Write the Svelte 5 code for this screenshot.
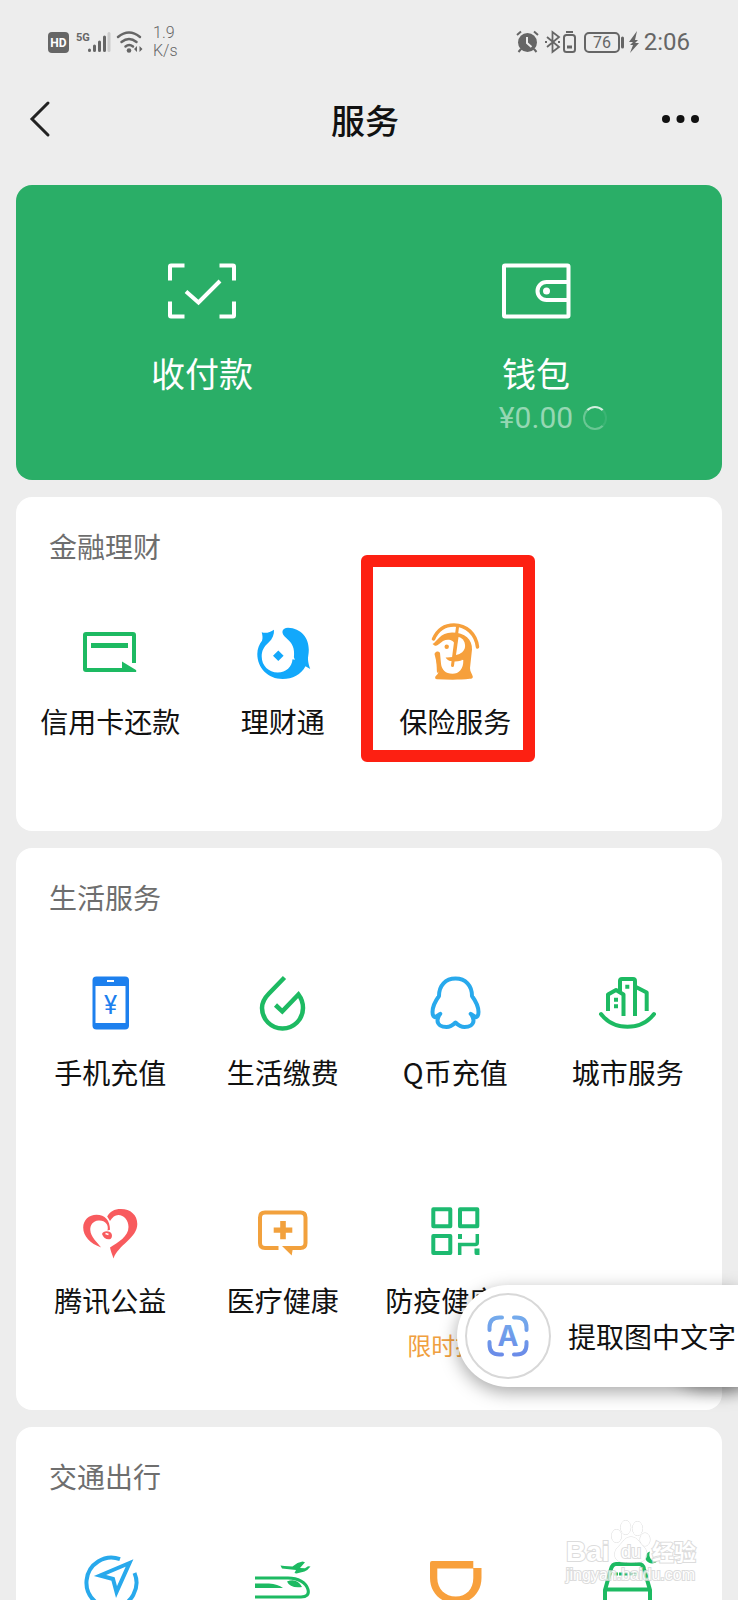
<script>
    const sections = [
        {
            title: "金融理财",
            items: [
                { icon: "card", label: "信用卡还款" },
                { icon: "fish", label: "理财通" },
                { icon: "insurance", label: "保险服务", marked: true },
            ],
        },
        {
            title: "生活服务",
            extract: true,
            items: [
                { icon: "phone", label: "手机充值" },
                { icon: "drop", label: "生活缴费" },
                { icon: "qq", label: "Q币充值" },
                { icon: "city", label: "城市服务" },
                { icon: "heart", label: "腾讯公益" },
                { icon: "medical", label: "医疗健康" },
                { icon: "qr", label: "防疫健康码", note: "限时抢购" },
            ],
        },
        {
            title: "交通出行",
            items: [{ icon: "compass" }, { icon: "train" }, { icon: "didi" }, { icon: "car" }],
        },
    ];
</script>

{#snippet icon(name)}
    <svg class="icon" viewBox="0 0 56 56" fill="none" stroke-width="4" aria-hidden="true">
        {#if name === "card"}
            <path d="M52 38V10q0-1-1-1H4q-1 0-1 1v34q0 1 1 1h38" stroke="#1dba62" />
            <path d="M9 18h37v5H9zM40 36.5 54 45q1 2-1 2H40z" fill="#1dba62" />
        {:else if name === "fish"}
            <path
                d="M6.7 7.3C11 8.600 15 7.400 19 4.700c.3 5-1.400 9-5.400 12.800C8.500 22 6.700 26 6.700 31.500c0 9.200 7 16 16 16 8.500 0 14.300-5.500 14.800-13.200l2.400.5-1-2.600c1-9-1.500-14-7.400-19C25 8 27 2.700 33 2.700c13 .3 21 10.300 20.800 22.300 0 4-1 7-.8 9.500.2 3.500 1.200 6.500 2.200 9.500l-4.700-2.800C46 49.500 37.500 54 27.700 54 13 54 2.300 43 2.300 29c0-5 2-10 4.700-13.300C8 13 7.400 10 6.700 7.300zM23.300 25.500l-5.300 5.300 5.300 5.300 5.300-5.300z"
                fill="#12a8fb"
            />
        {:else if name === "insurance"}
            <path d="M6.500 14C11 4 19 0 27 0c12.500 0 22 9 23.500 22" stroke="#f6a03c" stroke-width="3.500" stroke-linecap="round" />
            <path
                d="M5.500 19C10 17 13 7.500 25 7.500c13 0 20.500 7 20 17L43 43c0 4 2.300 6 2.800 8.500.3 1.800-1 2.300-3 2.300-10 1.200-22 1-33 .4-2 0-2-2.200-.8-3.400 2-1.500 2.700-3 2.300-6L7.500 29l2.800-6.500z"
                fill="#f6a03c"
            />
            <path d="M5 20.500c5 2 8-2.500 11-4.500 5-2.500 11-1 12 4l-2 12-7 .8c2 3.200 4 3.200 6.500 3.200l8.500-1.200 2.300.2c.3 9-4.300 13.800-10.800 13.800-7 0-10.800-4-11.500-10L13 28c-1-2-4-2-5 0z" fill="#fff" />
            <path d="M31.500 12c5 1 7 6 6.500 10-.5 4-4 7-9 8z" fill="#fff" />
            <path d="M9 30q2-2 3.500 0l1 15-3.500 3z" fill="#f6a03c" />
            <path d="M18.500 32.500q5 1 11-1l6-2-1 6q-11 3-16-3z" fill="#f6a03c" />
            <path d="M30.500 2 25.500 40.500" stroke="#f6a03c" stroke-width="3" stroke-linecap="round" />
            <circle cx="19.700" cy="21.700" r="2.200" fill="#f6a03c" />
        {:else if name === "phone"}
            <rect x="10.500" y=".5" width="36.500" height="53" rx="4" fill="#1d80ee" />
            <path d="M13.500 10h30v37h-30z" fill="#fff" />
            <path d="M25 5h7" stroke="#fff" stroke-width="2" />
            <text class="yen" x="28.500" y="38" text-anchor="middle">¥</text>
        {:else if name === "drop"}
            <path d="M29.500 1.500 14 17.500C9 22.500 7 27 7 32a20.500 20.500 0 0 0 41 0c0-5-1.300-9.300-4.500-13.500L27.300 35.300 20.500 29" stroke="#1dba62" stroke-width="4.500" />
        {:else if name === "qq"}
            <path
                d="M28.500 2.500C18.500 2.500 12 9.500 12 20c-4 5.500-6.500 11-6.500 16 0 4 1.500 5.500 3 5l4.800-3.200c-1.600 2-2.800 4.200-2.800 6.700 0 4 4 6.500 9 6.500 3.500 0 6.500-2 9-4.500 2.500 2.500 5.500 4.500 9 4.500 5 0 9-2.500 9-6.500 0-2.500-1.200-4.700-2.800-6.700l4.800 3.200c1.500.5 3-1 3-5 0-5-2.500-10.500-6.500-16 0-10.500-6.500-17.500-16.500-17.500z"
                stroke="#28a9ec"
                stroke-linejoin="round"
            />
        {:else if name === "city"}
            <g stroke="#1dba62" stroke-linejoin="round">
                <path d="M1 38c13 17 40 17 53 0" stroke-linecap="round" />
                <path d="M8 35V18.500L16 14l7.500 4.500V40M20 16V5q0-2 2-2h11q2 0 2 2v35M36 11l10.700 5.500V35" />
            </g>
            <path d="M25.300 8.700h4v4h-4zM14 21.700h4v4h-4zM14 28.300h4v4h-4z" fill="#1dba62" />
        {:else if name === "heart"}
            <path
                d="M25.200 12.500C28 7.500 32 5 39 5c9.500 0 16.300 6 16.300 15C55.300 34 36 41 31.500 54.500c-1.500-4.500-3-8-3.500-11 8-5 18.500-11 18.500-20.500 0-7-4.500-12-10.200-12-3.300 0-5.800 2-8.300 6z"
                fill="#f85b5e"
            />
            <path
                d="M25.500 26.500c1.500-6-2.500-10.500-9-10-5.500.5-8.500 4.500-8.200 9.500.3 6.500 6.500 12 10.900 17.500C8 39.500 1.200 32 1.200 23.500 1.200 16 7 10.700 14.500 10.700c8.500 0 13.500 5.500 13.500 15z"
                fill="#f85b5e"
            />
            <path d="M20 30c1-3 5-3.500 8-2 2.500 1.500 2.500 5.500.5 7-3.500 1-7-.5-8.500-5z" fill="#f85b5e" />
            <path d="m23.500 29.500 3 1" stroke="#fff" stroke-width="1.500" />
        {:else if name === "medical"}
            <path d="M23.500 44H10q-5 0-5-5V13.500q0-5 5-5h35.500q5 0 5 5V39q0 5-5 5H37" stroke="#f2a13d" />
            <path d="M27 42h12l-1.500 4.500-.8 5zM25.200 17h5.600v6.500h6.500v5.300h-6.500v6.500h-5.600v-6.500h-6.500v-5.300h6.500z" fill="#f2a13d" />
        {:else if name === "qr"}
            <path d="M6.300 5.300h17v17h-17zM33 5.300h17.300v17H33zM6.300 32h17v17h-17z" stroke="#1dba70" stroke-linejoin="round" />
            <path d="M32.700 51V40.500h15.600q2 0 2-2V30" stroke="#1dba70" stroke-width="3.500" />
            <path d="M31 30h4v5h-4zM47.500 44.500h5V51H49q-1.500 0-1.500-2z" fill="#1dba70" />
        {:else if name === "compass"}
            <path d="M38 4.200A25 25 0 1 0 52.500 18" stroke="#28a9ec" />
            <path d="M47.500 8 18 20.500l13 3.500 3.500 13z" stroke="#28a9ec" />
        {:else if name === "train"}
            <path d="M0 23h33c10 0 18 4.500 20 11.500 1.500 5-1.500 7.500-7 7.500H0" stroke="#1dba62" stroke-width="3" />
            <path
                d="M0 28.500h14q9 .5 14 4.500H0zM32 26.500q10-4 15 5.500-12 1.500-15-5.500zM25.500 10.500l4 .5 8 .5 5-3.500 5-1.500 2.500.8-5 5.700 5 .2 3-2 2.500.3q-3 4-6 5l-8 2-2-.6 1.500-2.900-14-1.500z"
                fill="#1dba62"
            />
        {:else if name === "didi"}
            <path
                d="M5 6h41.300v7H54.500v10c0 15-11.500 25.500-25.700 25.500S3 38 3 23V8q0-2 2-2zm5.300 7.500V23c0 11 8 18.500 18.500 18.500S46.300 34 46.300 23v-9.500z"
                fill="#f8a03c"
                fill-rule="evenodd"
            />
        {:else if name === "car"}
            <path d="M5 52V35l6-21q1.500-5 5-5h23q4 0 5 5l6 21v17M7 34.500h41" stroke="#1dba62" />
            <path d="M14 19h23" stroke="#1dba62" stroke-width="3" stroke-dasharray="4 1" />
            <path d="M50-3.500c-2 5 1 10 7 10-6 5-12.500-.5-11.500-5 .5-2.500 2-4.500 4.500-5z" fill="#1dba62" />
        {/if}
    </svg>
{/snippet}

<main>
    <div class="status">
        <svg width="96" height="24" viewBox="0 0 96 24" aria-hidden="true">
            <rect x="0" y="2" width="21" height="21" rx="4" fill="#666" />
            <text x="10.500" y="17" text-anchor="middle" font-size="12" font-weight="700" fill="#fff">HD</text>
            <text x="28" y="11" font-size="11" font-weight="700" fill="#666">5G</text>
            <g stroke="#666" stroke-width="3" fill="none" stroke-linecap="round">
                <path d="M41.500 20v.5M46.500 16v4.500M51.500 12v8.500M56.500 7v13.500" />
                <path d="M61 3.500v17" stroke="#ccc" />
                <path d="M70 7q11-9 22 0M73.500 12q7.500-6 15 0M77.500 16.500q3.700-3 7.500 0" stroke-width="2.500" />
            </g>
            <circle cx="81" cy="20.500" r="2.300" fill="#666" />
            <path d="m86 19 3-3v6zM94.500 19l-3-3v6z" fill="#666" />
        </svg>
        <span class="speed">1.9<br />K/s</span>
        <svg class="right" width="128" height="24" viewBox="0 0 128 24" fill="none" stroke="#666" stroke-width="2" aria-hidden="true">
            <circle cx="11.500" cy="12.500" r="9.500" fill="#666" stroke="none" />
            <path d="m1 5 4-3.500M22 5l-4-3.500M5 19l-2.500 3M18 19l2.500 3" />
            <path d="M11 7v6l4.500 4" stroke="#ededed" />
            <path d="m31 7 12 10-6.500 5V2L43 7 31 17M29 12h2M42 12h2" stroke-width="1.800" />
            <path d="M50 2h7" />
            <rect x="48" y="5" width="11" height="17" rx="2.500" />
            <path d="M51 17h5" stroke-width="3" />
            <rect x="69" y="3" width="34" height="19" rx="4" />
            <path d="M106.500 8v9" stroke-width="3" stroke-linecap="round" />
            <text x="86" y="18" text-anchor="middle" font-size="16" fill="#666" stroke="none">76</text>
            <path d="m121 1-8 11h4l-3 3h3l-3 8 9-10h-4l3-3h-3z" fill="#666" stroke="none" />
        </svg>
        <time>2:06</time>
    </div>

    <header>
        <button class="nav" aria-label="返回">
            <svg width="20" height="36" viewBox="0 0 20 36" fill="none" stroke="#222" stroke-width="3" stroke-linecap="round">
                <path d="M18 1 2 17l16 16" />
            </svg>
        </button>
        <h1>服务</h1>
        <button class="nav" aria-label="更多">
            <svg width="38" height="10" viewBox="0 0 38 10" fill="#111">
                <circle cx="4" cy="4" r="4" />
                <circle cx="18.500" cy="4" r="4" />
                <circle cx="33" cy="4" r="4" />
            </svg>
        </button>
    </header>

    <section class="pay">
        <button>
            <svg width="70" height="56" viewBox="0 0 70 56" fill="none" stroke="#fff" stroke-width="4" aria-hidden="true">
                <path d="M17.500 2.500H4q-1 0-1 1v14M52.500 2.500H66q1 0 1 1v14M17.500 53.500H4q-1 0-1-1v-14M52.500 53.500H66q1 0 1-1v-14" />
                <path d="m19 28.500 12.500 11L53 18" />
            </svg>
            <span class="name">收付款</span>
        </button>
        <button>
            <svg width="70" height="56" viewBox="0 0 70 56" fill="none" stroke="#fff" stroke-width="4" aria-hidden="true">
                <rect x="3" y="2.500" width="64.500" height="51" rx="1" />
                <path d="M67 19H45.500a9 9 0 0 0 0 18H67" />
                <circle cx="45.500" cy="28" r="3.500" fill="#fff" stroke="none" />
            </svg>
            <span class="name">钱包</span>
            <span class="amount">¥0.00<i class="spinner"></i></span>
        </button>
    </section>

    {#each sections as section}
        <section class="group">
            <h2>{section.title}</h2>
            <div class="grid">
                {#each section.items as item}
                    <button class="tile" class:marked={item.marked}>
                        {@render icon(item.icon)}
                        {#if item.label}
                            <span class="label">{item.label}</span>
                        {/if}
                        {#if item.note}
                            <span class="note">{item.note}</span>
                        {/if}
                    </button>
                {/each}
            </div>
            {#if section.extract}
                <button class="extract">
                    <span class="ring">
                        <svg width="42" height="42" viewBox="0 0 42 42" fill="none" aria-hidden="true">
                            <defs>
                                <linearGradient id="scan" x1="0" y1="0" x2="0" y2="42" gradientUnits="userSpaceOnUse">
                                    <stop offset="0" stop-color="#75acec" />
                                    <stop offset="1" stop-color="#6a8ae8" />
                                </linearGradient>
                            </defs>
                            <path
                                d="M2.500 15v-2.500q0-10 10-10H15M27 2.500h2.500q10 0 10 10V15M39.500 27v2.500q0 10-10 10H27M15 39.500h-2.500q-10 0-10-10V27"
                                stroke="url(#scan)"
                                stroke-width="4"
                                stroke-linecap="round"
                            />
                            <text x="21" y="31" text-anchor="middle" font-size="28" font-weight="700" fill="url(#scan)">A</text>
                        </svg>
                    </span>
                    提取图中文字
                </button>
            {/if}
        </section>
    {/each}

    <svg class="watermark" width="136" height="68" viewBox="0 0 136 68" fill="#fff" stroke="#d4d4d4" paint-order="stroke" aria-hidden="true">
        <ellipse cx="51.500" cy="18" rx="5" ry="6.500" />
        <ellipse cx="60.700" cy="9.500" rx="5" ry="7" />
        <ellipse cx="72.500" cy="10.500" rx="5" ry="7" />
        <ellipse cx="80" cy="21.500" rx="5" ry="6.500" />
        <path d="M66 19c6 0 8 5 12 9 6 5 5 15-3 16-6 .5-12 .5-18 0-9-1-9-11-3-16 4-4 6-9 12-9z" />
        <g stroke-width="2">
            <text x="1" y="43" font-size="28" font-weight="700">Bai</text>
            <text x="56" y="40" font-size="18">du</text>
            <text x="87" y="42" font-size="22" font-weight="700">经验</text>
            <text x="1" y="62" font-size="16">jingyan.baidu.com</text>
        </g>
    </svg>
</main>

<style>
    :global(body) {
        margin: 0;
        background: #ededed;
    }

    main {
        position: relative;
        box-sizing: border-box;
        height: 100vh;
        overflow: hidden;
        padding: 0 16px;
        background: #ededed;
        color: #111;
        font-family: "Noto Sans CJK SC", sans-serif;
    }

    button {
        border: 0;
        padding: 0;
        background: none;
        color: inherit;
        font: inherit;
        cursor: pointer;
    }

    svg {
        display: block;
        flex: none;
        overflow: visible;
    }

    .status {
        display: flex;
        align-items: center;
        height: 84px;
        padding: 0 32px;
        color: #666;
        font-family: Roboto, sans-serif;
    }

    .speed {
        margin-left: 9px;
        font-size: 16px;
        font-weight: 300;
        line-height: 18px;
    }

    .right {
        margin-left: auto;
    }

    time {
        font-size: 24px;
        line-height: 32px;
    }

    header {
        display: flex;
        align-items: center;
        justify-content: space-between;
        height: 72px;
        margin-bottom: 29px;
        padding: 0 22px 0 14px;
    }

    .nav {
        display: flex;
        width: 38px;
        height: 38px;
        align-items: center;
    }

    h1 {
        margin: 0;
        font-size: 34px;
        font-weight: 500;
        line-height: 48px;
    }

    .pay {
        display: grid;
        grid-template-columns: 1fr 1fr;
        box-sizing: border-box;
        min-height: 295px;
        padding: 78px 19px 40px;
        border-radius: 16px;
        background: #2aae67;
        color: #fff;
    }

    .pay button {
        display: flex;
        flex-direction: column;
        align-items: center;
    }

    .name {
        margin-top: 30px;
        font-size: 34px;
        line-height: 48px;
    }

    .amount {
        position: relative;
        margin-top: 2px;
        color: #95d7b3;
        font-family: Roboto, sans-serif;
        font-size: 30px;
        line-height: 38px;
    }

    .spinner {
        position: absolute;
        top: 7px;
        left: calc(100% + 10px);
        width: 20px;
        height: 20px;
        border: 2px solid #6ac794;
        border-top-color: #d4efe0;
        border-right-color: #3bb574;
        border-radius: 50%;
    }

    .group {
        position: relative;
        margin-top: 17px;
        padding: 29px 8px 0;
        border-radius: 16px;
        background: #fff;
    }

    h2 {
        margin: 0 0 37px;
        padding-left: 25px;
        color: #6e6e6e;
        font-size: 28px;
        font-weight: 400;
        line-height: 40px;
    }

    .grid {
        display: grid;
        grid-template-columns: repeat(4, 1fr);
    }

    .tile {
        position: relative;
        display: flex;
        flex-direction: column;
        align-items: center;
        box-sizing: border-box;
        height: 228px;
        padding-top: 22px;
    }

    .marked::after {
        content: "";
        position: absolute;
        top: -48px;
        left: -8px;
        box-sizing: border-box;
        width: 174px;
        height: 207px;
        border: 12px solid #fd2012;
        border-radius: 6px;
    }

    .icon {
        width: 56px;
        height: 56px;
    }

    .yen {
        fill: #1d80ee;
        font-family: Roboto, sans-serif;
        font-size: 25px;
    }

    .label {
        margin-top: 20px;
        font-size: 28px;
        line-height: 40px;
        white-space: nowrap;
    }

    .note {
        margin-top: 9px;
        color: #f0a040;
        font-size: 24px;
        line-height: 32px;
    }

    .extract {
        position: absolute;
        right: -16px;
        bottom: 23px;
        display: flex;
        align-items: center;
        box-sizing: border-box;
        width: 281px;
        height: 102px;
        padding-left: 8px;
        border-radius: 51px 0 0 51px;
        background: #fff;
        box-shadow:
            0 5px 18px rgba(0, 0, 0, 0.35),
            200px 8px 14px -4px rgba(0, 0, 0, 0.3);
        font-size: 28px;
        white-space: nowrap;
    }

    .ring {
        display: flex;
        flex: none;
        align-items: center;
        justify-content: center;
        box-sizing: border-box;
        width: 86px;
        height: 86px;
        margin-right: 17px;
        border: 2px solid #d8d8d8;
        border-radius: 50%;
    }

    .ring text {
        font-family: Inter, sans-serif;
    }

    .watermark {
        position: absolute;
        right: 37px;
        bottom: 14px;
        font-family: "Liberation Sans", "Noto Sans CJK SC", sans-serif;
        opacity: 0.8;
    }
</style>
